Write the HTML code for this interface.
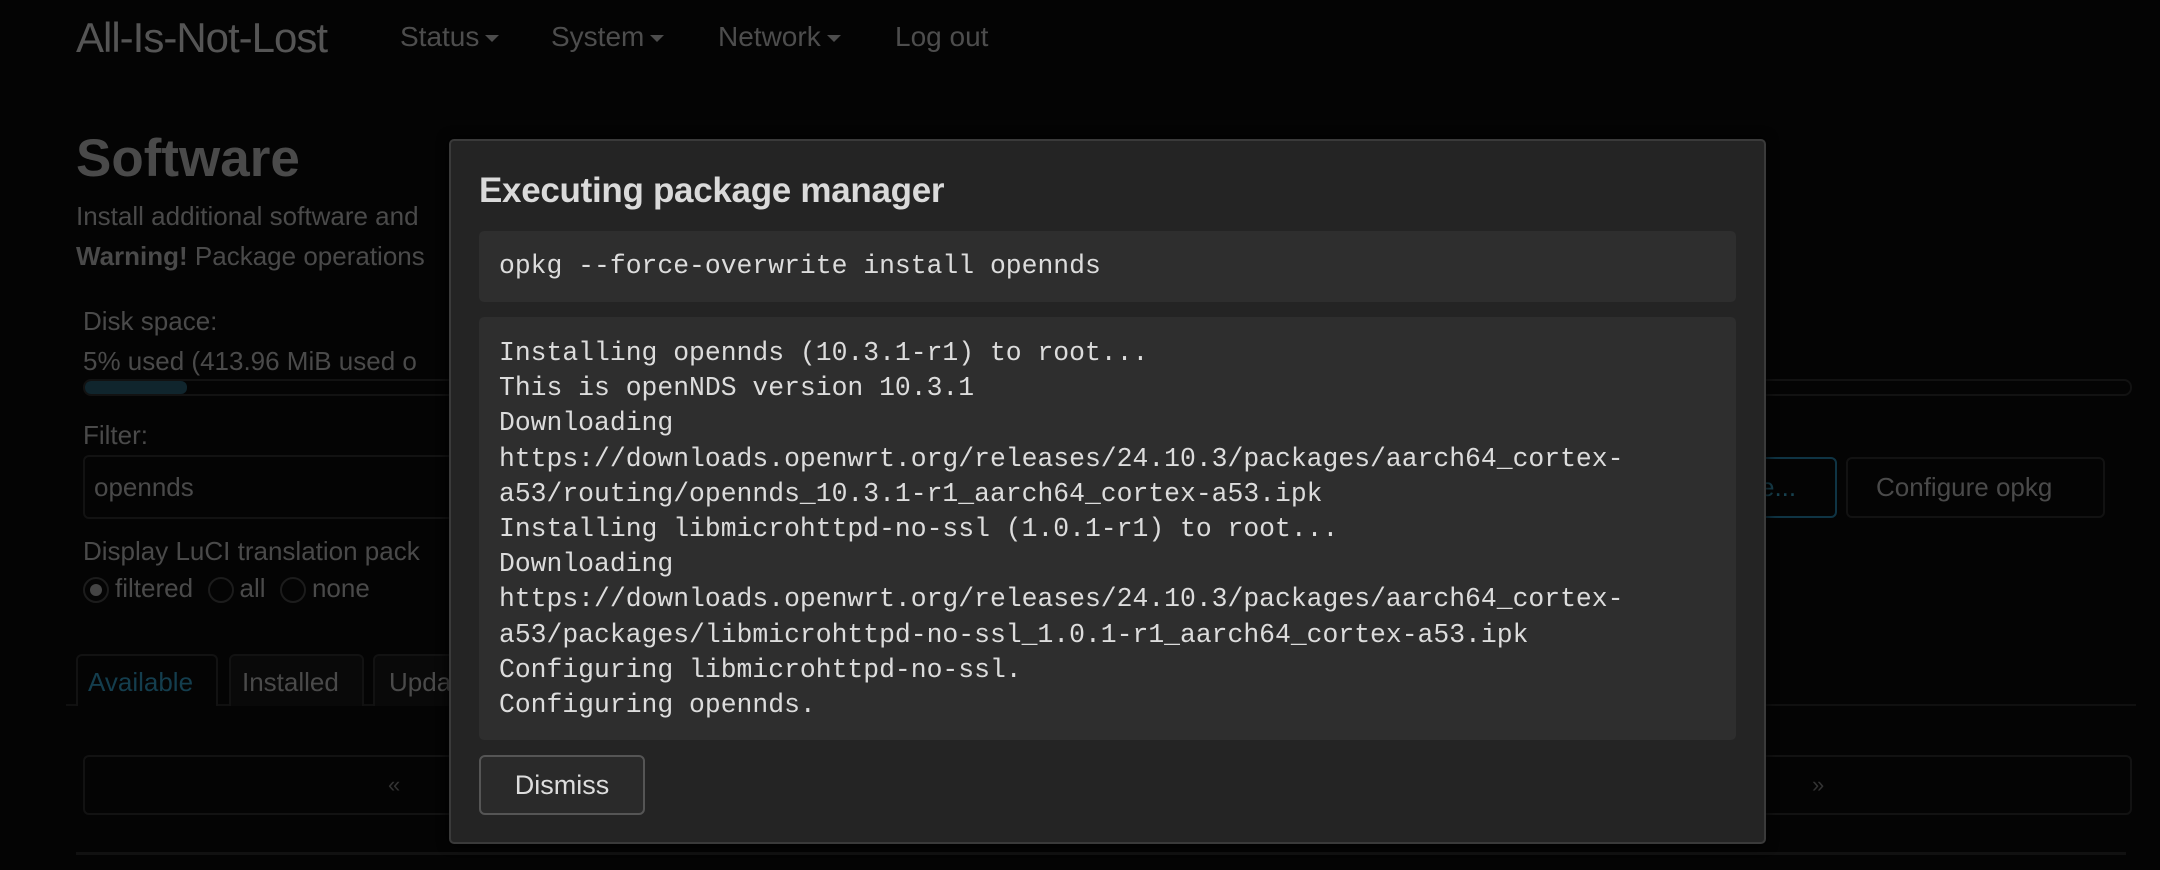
<!DOCTYPE html>
<html><head><meta charset="utf-8"><style>
*{box-sizing:border-box;margin:0;padding:0}
body{width:2160px;height:870px;background:#040404;font-family:"Liberation Sans",sans-serif;color:#4a4a4a;position:relative;overflow:hidden}
.a{position:absolute;white-space:nowrap}
.nav{font-size:28px;color:#4d4d4d;top:21px}
.caret{display:inline-block;width:0;height:0;border-left:7px solid transparent;border-right:7px solid transparent;border-top:7px solid #4d4d4d;vertical-align:middle;margin-left:6px}
.box{position:absolute;border:2px solid #121212;border-radius:6px}
.radio{display:inline-block;width:26px;height:26px;border:2px solid #1c1c1c;border-radius:50%;vertical-align:middle;margin-right:6px;position:relative}
.mono{font-family:"Liberation Mono","DejaVu Sans Mono",monospace;font-size:26.4px;color:#dcdcdc;letter-spacing:0px}
</style></head><body>
<div class="a" style="left:76px;top:14px;font-size:42px;color:#555;letter-spacing:-1px">All-Is-Not-Lost</div>
<div class="a nav" style="left:400px">Status<span class="caret"></span></div>
<div class="a nav" style="left:551px">System<span class="caret"></span></div>
<div class="a nav" style="left:718px">Network<span class="caret"></span></div>
<div class="a nav" style="left:895px">Log out</div>

<div class="a" style="left:76px;top:128px;font-size:53px;font-weight:bold;color:#4a4a4a">Software</div>
<div class="a" style="left:76px;top:201px;font-size:26px">Install additional software and</div>
<div class="a" style="left:76px;top:241px;font-size:26px"><b>Warning!</b> Package operations</div>
<div class="a" style="left:83px;top:306px;font-size:26px">Disk space:</div>
<div class="a" style="left:83px;top:346px;font-size:26px">5% used (413.96 MiB used o</div>
<div class="box" style="left:83px;top:379px;width:2049px;height:17px;border-radius:8px"></div>
<div class="a" style="left:85px;top:381px;width:102px;height:13px;background:#10252d;border-radius:6px"></div>
<div class="a" style="left:83px;top:420px;font-size:26px">Filter:</div>
<div class="box" style="left:83px;top:455px;width:400px;height:64px"></div>
<div class="a" style="left:94px;top:472px;font-size:26px">opennds</div>
<div class="box" style="left:1700px;top:457px;width:137px;height:61px;border-color:#0f3444"></div>
<div class="a" style="left:1760px;top:472px;font-size:26px;color:#17414f">e...</div>
<div class="box" style="left:1846px;top:457px;width:259px;height:61px"></div>
<div class="a" style="left:1876px;top:472px;font-size:26px">Configure opkg</div>
<div class="a" style="left:83px;top:536px;font-size:26px">Display LuCI translation pack</div>
<div class="a" style="left:83px;top:573px;font-size:26px"><span class="radio"><span style="position:absolute;left:5px;top:5px;width:12px;height:12px;border-radius:50%;background:#444"></span></span>filtered&nbsp; <span class="radio"></span>all&nbsp; <span class="radio"></span>none</div>
<div class="a" style="left:66px;top:704px;width:2070px;height:2px;background:#101010"></div>
<div class="box" style="left:76px;top:654px;width:142px;height:52px;border-bottom:none;border-radius:6px 6px 0 0;background:#040404"></div>
<div class="a" style="left:88px;top:667px;font-size:26px;color:#143e4e">Available</div>
<div class="box" style="left:229px;top:654px;width:135px;height:52px;border-bottom:none;border-radius:6px 6px 0 0;background:#090909"></div>
<div class="a" style="left:242px;top:667px;font-size:26px">Installed</div>
<div class="box" style="left:373px;top:654px;width:120px;height:52px;border-bottom:none;border-radius:6px 6px 0 0;background:#090909"></div>
<div class="a" style="left:389px;top:667px;font-size:26px">Updates</div>
<div class="box" style="left:83px;top:755px;width:2049px;height:60px"></div>
<div class="a" style="left:388px;top:772px;font-size:22px;color:#333">«</div>
<div class="a" style="left:1812px;top:772px;font-size:22px;color:#333">»</div>
<div class="a" style="left:76px;top:852px;width:2050px;height:3px;background:#111"></div>

<div class="a" style="left:449px;top:139px;width:1317px;height:705px;background:#242424;border:2px solid #3a3a3a;border-radius:5px;box-shadow:0 0 12px #000"></div>
<div class="a" style="left:479px;top:171px;font-size:35px;font-weight:bold;color:#dadada;letter-spacing:-0.3px">Executing package manager</div>
<div class="a" style="left:479px;top:231px;width:1257px;height:71px;background:#2e2e2e;border-radius:5px"></div>
<div class="a mono" style="left:499px;top:251px">opkg --force-overwrite install opennds</div>
<div class="a" style="left:479px;top:317px;width:1257px;height:423px;background:#2e2e2e;border-radius:5px"></div>
<div class="a mono" style="left:499px;top:336px;line-height:35.2px;white-space:pre">Installing opennds (10.3.1-r1) to root...
This is openNDS version 10.3.1
Downloading
https://downloads.openwrt.org/releases/24.10.3/packages/aarch64_cortex-
a53/routing/opennds_10.3.1-r1_aarch64_cortex-a53.ipk
Installing libmicrohttpd-no-ssl (1.0.1-r1) to root...
Downloading
https://downloads.openwrt.org/releases/24.10.3/packages/aarch64_cortex-
a53/packages/libmicrohttpd-no-ssl_1.0.1-r1_aarch64_cortex-a53.ipk
Configuring libmicrohttpd-no-ssl.
Configuring opennds.</div>
<div class="a" style="left:479px;top:755px;width:166px;height:60px;background:#2a2a2a;border:2px solid #555;border-radius:6px;font-size:27px;color:#ddd;text-align:center;line-height:56px">Dismiss</div>
</body></html>
